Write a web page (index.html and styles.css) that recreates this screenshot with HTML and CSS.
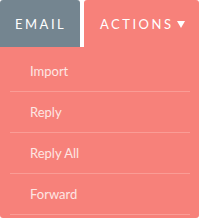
FILE: index.html
```html
<!DOCTYPE html>
<html>
<head>
    <meta charset="utf-8">
    <title>Email actions</title>
    <link rel="stylesheet" href="styles.css">
</head>
<body>
    <div class="wrap">
        <div class="tabs">
            <a href="javascript:;" class="tab email">Email</a>
            <a href="javascript:;" class="tab actions">Actions <span class="caret"></span></a>
        </div>
        <ul class="menu">
            <li>Import</li>
            <li>Reply</li>
            <li>Reply All</li>
            <li>Forward</li>
        </ul>
    </div>
</body>
</html>
```

FILE: styles.css
```css
*{
    margin: 0;
    padding: 0;
    box-sizing: border-box;
}
body{
    margin: 0;
    background: #fff;
    font-family: Lato, "Open Sans", sans-serif;
}
.wrap{
    width: 199px;
}
.tabs{
    display: flex;
    height: 47px;
}
.tab{
    display: flex;
    align-items: center;
    height: 47px;
    color: #fff;
    font-size: 13px;
    letter-spacing: 2.5px;
    text-transform: uppercase;
    text-decoration: none;
}
.email{
    width: 80px;
    padding-left: 15px;
    background: #748590;
    border-radius: 3px 3px 0 0;
}
.actions{
    flex: 1;
    margin-left: 4px;
    padding-left: 16px;
    background: #f7817a;
    border-radius: 3px 3px 0 0;
}
.caret{
    display: inline-block;
    width: 0;
    height: 0;
    margin-left: 4px;
    margin-top: 2px;
    border-left: 4px solid transparent;
    border-right: 4px solid transparent;
    border-top: 7px solid #fff;
}
.menu{
    list-style: none;
    background: #f7817a;
    padding: 4px 9px 3px 10px;
    border-radius: 0 0 3px 3px;
}
.menu li{
    height: 41px;
    line-height: 40px;
    padding-left: 20px;
    font-size: 13px;
    color: #fde6e3;
    border-bottom: 1px solid #fa9c95;
}
```
